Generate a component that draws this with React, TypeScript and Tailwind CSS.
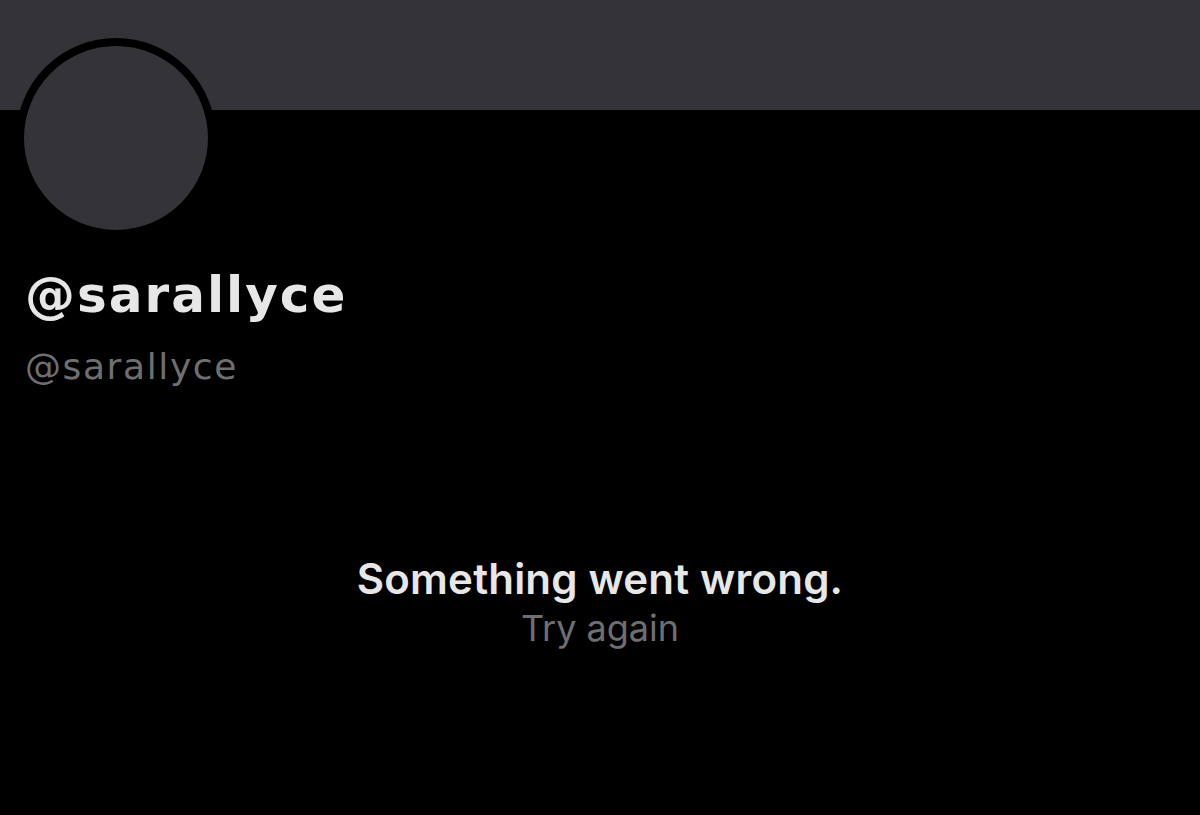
export default function App() {
  return (
    <div className="w-[1200px] h-[815px] bg-black overflow-hidden font-['DejaVu_Sans',sans-serif]">
      <div className="h-[110px] bg-[#333338]" />
      <div className="ml-[16px] -mt-[72px] w-[200px] h-[200px] rounded-full border-[8px] border-black bg-[#333338]" />
      <div className="pl-[25px] mt-[28px]">
        <h1 className="text-[50px] leading-[58px] font-bold text-[#e7e7e8] tracking-[2px]">@sarallyce</h1>
        <p className="mt-[21px] text-[36px] leading-[44px] text-[#6f6f72] tracking-[1.6px]">@sarallyce</p>
      </div>
      <div className="mt-[165px] flex flex-col items-center font-['Inter',sans-serif]">
        <p className="text-[42px] leading-[50px] font-semibold text-[#e7e7e8] tracking-[0.2px]">Something went wrong.</p>
        <p className="mt-[2px] text-[36px] leading-[44px] text-[#6f6f72]">Try again</p>
      </div>
    </div>
  );
}
